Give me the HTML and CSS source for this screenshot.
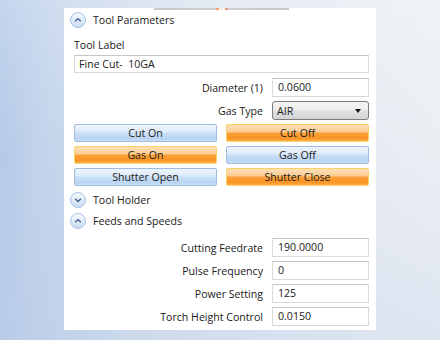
FILE: index.html
```html
<!DOCTYPE html>
<html>
<head>
<meta charset="utf-8">
<link rel="stylesheet" href="styles.css">
</head>
<body>
<div class="panel">
  <div class="top-strip"></div>
  <div class="section-header">
    <svg class="toggle" width="16" height="16" viewBox="0 0 16 16"><defs><linearGradient id="tg1" x1="0" y1="0" x2="0" y2="1"><stop offset="0" stop-color="#f8fbff"/><stop offset="1" stop-color="#c7dbf3"/></linearGradient></defs><circle cx="8" cy="8" r="7.5" fill="url(#tg1)" stroke="#a6c1e3"/><path d="M5.2 9.3 8 6.6 10.8 9.3" fill="none" stroke="#3d5f8e" stroke-width="1.3"/></svg>
    <span>Tool Parameters</span>
  </div>
  <div class="field-label">Tool Label</div>
  <div class="textbox wide">Fine Cut-&nbsp; 10GA</div>
  <div class="form-row first">
    <span class="row-label">Diameter (1)</span>
    <div class="textbox">0.0600</div>
  </div>
  <div class="form-row">
    <span class="row-label">Gas Type</span>
    <div class="select"><span>AIR</span><span class="arrow"></span></div>
  </div>
  <div class="btn-grid">
    <div class="btn blue">Cut On</div>
    <div class="btn orange">Cut Off</div>
    <div class="btn orange">Gas On</div>
    <div class="btn blue">Gas Off</div>
    <div class="btn blue">Shutter Open</div>
    <div class="btn orange">Shutter Close</div>
  </div>
  <div class="section-header holder">
    <svg class="toggle" width="16" height="16" viewBox="0 0 16 16"><defs><linearGradient id="tg2" x1="0" y1="0" x2="0" y2="1"><stop offset="0" stop-color="#f8fbff"/><stop offset="1" stop-color="#c7dbf3"/></linearGradient></defs><circle cx="8" cy="8" r="7.5" fill="url(#tg2)" stroke="#a6c1e3"/><path d="M5.2 6.8 8 9.5 10.8 6.8" fill="none" stroke="#3d5f8e" stroke-width="1.3"/></svg>
    <span>Tool Holder</span>
  </div>
  <div class="section-header feeds">
    <svg class="toggle" width="16" height="16" viewBox="0 0 16 16"><defs><linearGradient id="tg3" x1="0" y1="0" x2="0" y2="1"><stop offset="0" stop-color="#f8fbff"/><stop offset="1" stop-color="#c7dbf3"/></linearGradient></defs><circle cx="8" cy="8" r="7.5" fill="url(#tg3)" stroke="#a6c1e3"/><path d="M5.2 9.3 8 6.6 10.8 9.3" fill="none" stroke="#3d5f8e" stroke-width="1.3"/></svg>
    <span>Feeds and Speeds</span>
  </div>
  <div class="feeds-group">
    <div class="form-row">
      <span class="row-label">Cutting Feedrate</span>
      <div class="textbox">190.0000</div>
    </div>
    <div class="form-row">
      <span class="row-label">Pulse Frequency</span>
      <div class="textbox">0</div>
    </div>
    <div class="form-row">
      <span class="row-label">Power Setting</span>
      <div class="textbox">125</div>
    </div>
    <div class="form-row">
      <span class="row-label">Torch Height Control</span>
      <div class="textbox">0.0150</div>
    </div>
  </div>
</div>
</body>
</html>
```

FILE: styles.css
```css
html, body {
  margin: 0;
  padding: 0;
}

body {
  width: 440px;
  height: 340px;
  overflow: hidden;
  font-family: "Open Sans", "Noto Sans", sans-serif;
  font-size: 10.6px;
  color: #202020;
  background:
    linear-gradient(to bottom, rgba(255,255,255,0.28) 0%, rgba(255,255,255,0) 45%, rgba(120,160,220,0.12) 100%),
    linear-gradient(100deg, #adc5e6 0%, #c3d3ea 14%, #d9e2ee 40%, #e7ebf2 75%, #eceff4 100%);
}

.panel {
  margin: 8px 0 0 64px;
  width: 312px;
  height: 322px;
  box-sizing: border-box;
  padding: 0 7px 0 10px;
  background: #fff;
  display: flex;
  flex-direction: column;
}

.top-strip {
  height: 2px;
  width: 135px;
  margin-left: 80px;
  background: linear-gradient(to right, #c9c9c9 0, #cfcfcf 62px, #f4a36e 62px, #f4a36e 65px, #fbeee8 65px, #fbeee8 71px, #ef9c7e 71px, #ef9c7e 74px, #d0d0d0 74px, #c6c6c6 100%);
}

.section-header {
  height: 20px;
  display: flex;
  align-items: center;
  gap: 7px;
  margin-left: -4px;
}

.toggle {
  flex: none;
  display: block;
}

.section-header.holder {
  margin-top: 4px;
}

.section-header.feeds {
  margin-top: 1px;
}

.field-label {
  margin-top: 7px;
  height: 16px;
  line-height: 16px;
}

.textbox {
  box-sizing: border-box;
  height: 19px;
  line-height: 17px;
  padding: 0 5px;
  border: 1px solid #dadada;
  border-top-color: #c6c6c6;
  background: #fff;
  white-space: pre;
}

.textbox.wide {
  margin-top: 2px;
  height: 18px;
  line-height: 16px;
  padding-left: 4px;
}

.form-row {
  display: flex;
  align-items: center;
  justify-content: flex-end;
  gap: 9px;
  margin-top: 4px;
}

.form-row.first {
  margin-top: 5px;
}

.form-row .textbox,
.form-row .select {
  width: 97px;
  flex: none;
}

.row-label {
  text-align: right;
}

.select {
  box-sizing: border-box;
  height: 19px;
  border: 1px solid #7c7c7c;
  border-radius: 3px;
  padding: 0 5px 0 4px;
  display: flex;
  align-items: center;
  justify-content: space-between;
  background: linear-gradient(to bottom, #f4f4f4 0%, #ededed 48%, #e0e0e0 52%, #d4d4d4 100%);
}

.arrow {
  width: 0;
  height: 0;
  border-left: 3px solid transparent;
  border-right: 3px solid transparent;
  border-top: 4px solid #111;
  margin-right: 2px;
}

.btn-grid {
  margin-top: 4px;
  display: grid;
  grid-template-columns: 1fr 1fr;
  column-gap: 9px;
  row-gap: 4px;
}

.btn {
  box-sizing: border-box;
  height: 18px;
  line-height: 16px;
  text-align: center;
  border-radius: 2px;
}

.btn.blue {
  border: 1px solid #9fbde2;
  background: linear-gradient(to bottom, #eef5fd 0%, #deebf9 40%, #cbe0f7 50%, #b9d4f2 85%, #cbe0f7 100%);
}

.btn.orange {
  border: 1px solid #f9d266;
  background: linear-gradient(to bottom, #fee0b8 0%, #fdcc92 42%, #fc9f37 52%, #fa9322 85%, #fcb35a 100%);
}

.feeds-group {
  margin-top: 3px;
}
```
